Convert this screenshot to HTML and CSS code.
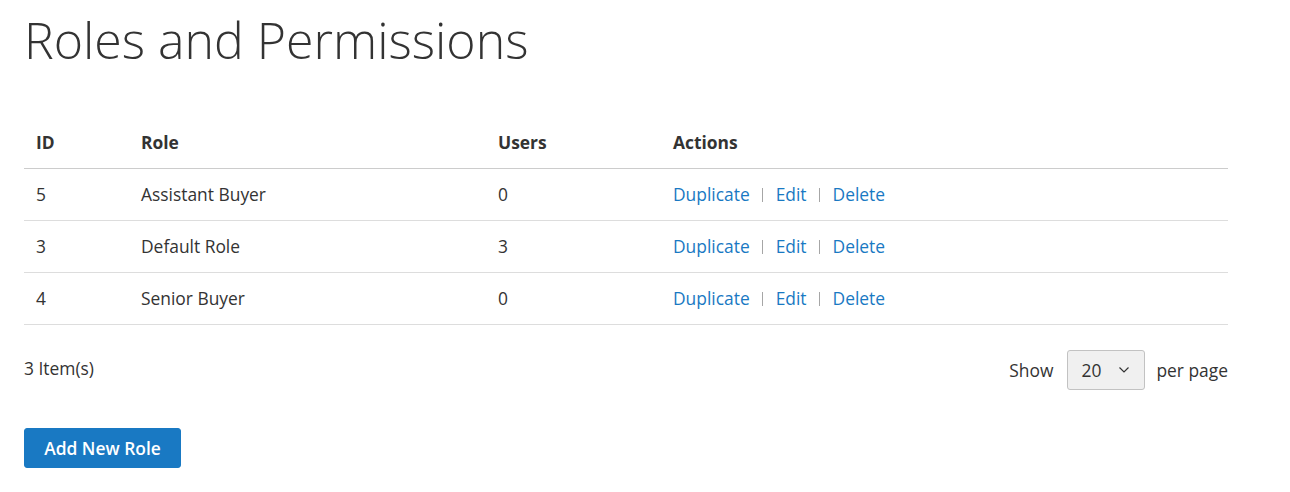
FILE: index.html
```html
<!DOCTYPE html>
<html lang="en">
<head>
<meta charset="utf-8">
<title>Roles and Permissions</title>
<link rel="stylesheet" href="styles.css">
</head>
<body>
<div class="page">
  <h1 class="page-title">Roles and Permissions</h1>
  <table class="roles">
    <thead>
      <tr><th class="c-id">ID</th><th class="c-role">Role</th><th class="c-users">Users</th><th>Actions</th></tr>
    </thead>
    <tbody>
      <tr><td>5</td><td>Assistant Buyer</td><td>0</td><td class="actions"><a href="#">Duplicate</a><span class="sep"></span><a href="#">Edit</a><span class="sep"></span><a href="#">Delete</a></td></tr>
      <tr><td>3</td><td>Default Role</td><td>3</td><td class="actions"><a href="#">Duplicate</a><span class="sep"></span><a href="#">Edit</a><span class="sep"></span><a href="#">Delete</a></td></tr>
      <tr><td>4</td><td>Senior Buyer</td><td>0</td><td class="actions"><a href="#">Duplicate</a><span class="sep"></span><a href="#">Edit</a><span class="sep"></span><a href="#">Delete</a></td></tr>
    </tbody>
  </table>
  <div class="toolbar">
    <div class="amount">3 Item(s)</div>
    <div class="limiter">
      <span>Show</span>
      <div class="select"><span>20</span><svg width="12" height="8" viewBox="0 0 12 8"><path d="M1.5 1.5 L6 6 L10.5 1.5" fill="none" stroke="#333" stroke-width="1.2"/></svg></div>
      <span>per page</span>
    </div>
  </div>
  <button class="btn-primary" type="button">Add New Role</button>
</div>
</body>
</html>
```

FILE: styles.css
```css
* { box-sizing: border-box; }
html, body { margin: 0; padding: 0; background: #fff; }
body {
  font-family: "Open Sans", "Liberation Sans", sans-serif;
  font-size: 17.4px;
  color: #333;
}
.page {
  width: 1228px;
  padding: 0 0 0 24px;
}
.page-title {
  margin: 0;
  padding-top: 10px;
  font-weight: 300;
  font-size: 50px;
  line-height: 60px;
  color: #333;
  height: 116px;
}
.roles {
  width: 100%;
  border-collapse: collapse;
}
.roles th, .roles td {
  text-align: left;
  padding: 0 12px;
  height: 52px;
  vertical-align: middle;
  line-height: 22px;
}
.roles th {
  font-weight: 700;
  border-bottom: 1px solid #ccc;
  color: #333;
}
.roles td { border-bottom: 1px solid #ddd; }
.c-id { width: 105px; }
.c-role { width: 357px; }
.c-users { width: 175px; }
.actions a {
  color: #1979c3;
  text-decoration: none;
}
.actions .sep {
  display: inline-block;
  width: 1px;
  height: 14px;
  background: #a6a6a6;
  margin: 0 12.5px;
  vertical-align: -1px;
}
.toolbar {
  display: flex;
  justify-content: space-between;
  align-items: center;
  margin-top: 25px;
  height: 40px;
}
.amount { margin-top: -3px; }
.limiter {
  display: flex;
  align-items: center;
}
.limiter .select { margin: 0 11px 0 14px; }
.select {
  display: flex;
  align-items: center;
  justify-content: space-between;
  width: 78px;
  height: 40px;
  padding: 0 14px 0 13px;
  background: #f0f0f0;
  border: 1px solid #c2c2c2;
  border-radius: 3px;
}
.btn-primary {
  margin-top: 38px;
  display: block;
  width: 157px;
  height: 40px;
  background: #1979c3;
  border: 1px solid #1979c3;
  border-radius: 3px;
  color: #fff;
  font-family: "Open Sans", "Liberation Sans", sans-serif;
  font-weight: 600;
  font-size: 17.4px;
  padding: 0;
}
```
